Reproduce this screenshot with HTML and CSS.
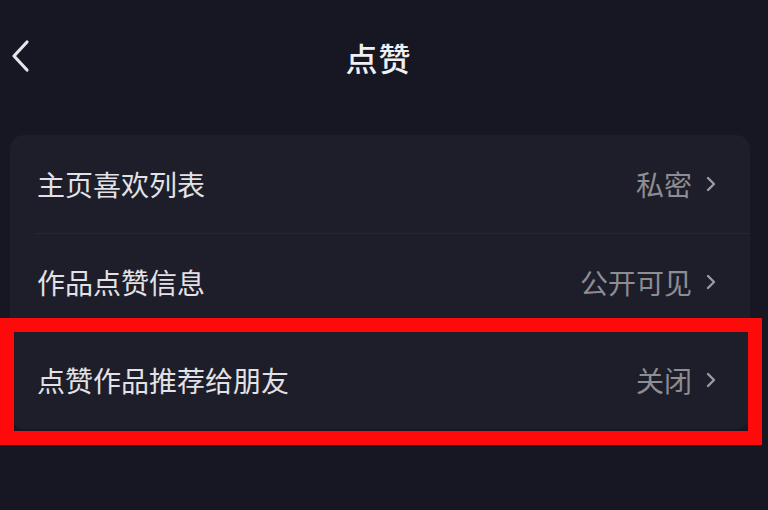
FILE: index.html
```html
<!DOCTYPE html>
<html lang="zh-CN">
<head>
<meta charset="utf-8">
<link rel="stylesheet" href="styles.css">
</head>
<body>
<div class="page">
  <header class="header">
    <svg class="back" viewBox="0 0 20 34" width="20" height="34"><path d="M17 3 L4 17 L17 31" fill="none" stroke="#e6e6ea" stroke-width="3.2" stroke-linecap="round" stroke-linejoin="round"/></svg>
    <h1 class="title">点赞</h1>
  </header>
  <section class="card">
    <div class="row">
      <span class="label">主页喜欢列表</span>
      <span class="value">私密<svg class="chev" viewBox="0 0 12 18" width="12" height="18"><path d="M3 3 L9 9 L3 15" fill="none" stroke="#9a9aa0" stroke-width="2.4" stroke-linecap="round" stroke-linejoin="round"/></svg></span>
    </div>
    <div class="row">
      <span class="label">作品点赞信息</span>
      <span class="value">公开可见<svg class="chev" viewBox="0 0 12 18" width="12" height="18"><path d="M3 3 L9 9 L3 15" fill="none" stroke="#9a9aa0" stroke-width="2.4" stroke-linecap="round" stroke-linejoin="round"/></svg></span>
    </div>
    <div class="row">
      <span class="label">点赞作品推荐给朋友</span>
      <span class="value">关闭<svg class="chev" viewBox="0 0 12 18" width="12" height="18"><path d="M3 3 L9 9 L3 15" fill="none" stroke="#9a9aa0" stroke-width="2.4" stroke-linecap="round" stroke-linejoin="round"/></svg></span>
    </div>
  </section>
  <div class="highlight"></div>
</div>
</body>
</html>
```
FILE: styles.css
```css
html, body {
  margin: 0;
  padding: 0;
  background: #161722;
}
body {
  font-family: "Noto Sans CJK SC", "Noto Sans", sans-serif;
  width: 768px;
  height: 510px;
  overflow: hidden;
}
.page {
  position: relative;
  width: 768px;
  height: 510px;
}
.header {
  position: relative;
  height: 114px;
  display: flex;
  align-items: center;
  justify-content: center;
  padding-right: 11px;
}
.back {
  position: absolute;
  left: 10px;
  top: 39px;
}
.title {
  margin: 0;
  font-size: 32px;
  font-weight: 500;
  color: #f0f0f2;
  letter-spacing: 1px;
}
.card {
  margin: 21px 18px 0 10px;
  background: #1d1e29;
  border-radius: 14px;
  overflow: hidden;
}
.row {
  height: 98px;
  display: flex;
  align-items: center;
  justify-content: space-between;
  padding: 0 33px 0 27px;
  position: relative;
}
.row + .row::before {
  content: "";
  position: absolute;
  top: 0;
  left: 26px;
  right: 0;
  height: 1px;
  background: #262733;
}
.label {
  font-size: 28px;
  color: #e2e2e6;
}
.value {
  display: flex;
  align-items: center;
  gap: 13px;
  font-size: 28px;
  color: #8d8d94;
}
.highlight {
  position: absolute;
  left: 0;
  top: 318px;
  width: 734px;
  height: 99px;
  border: 14px solid #ff0a0a;
}
```
